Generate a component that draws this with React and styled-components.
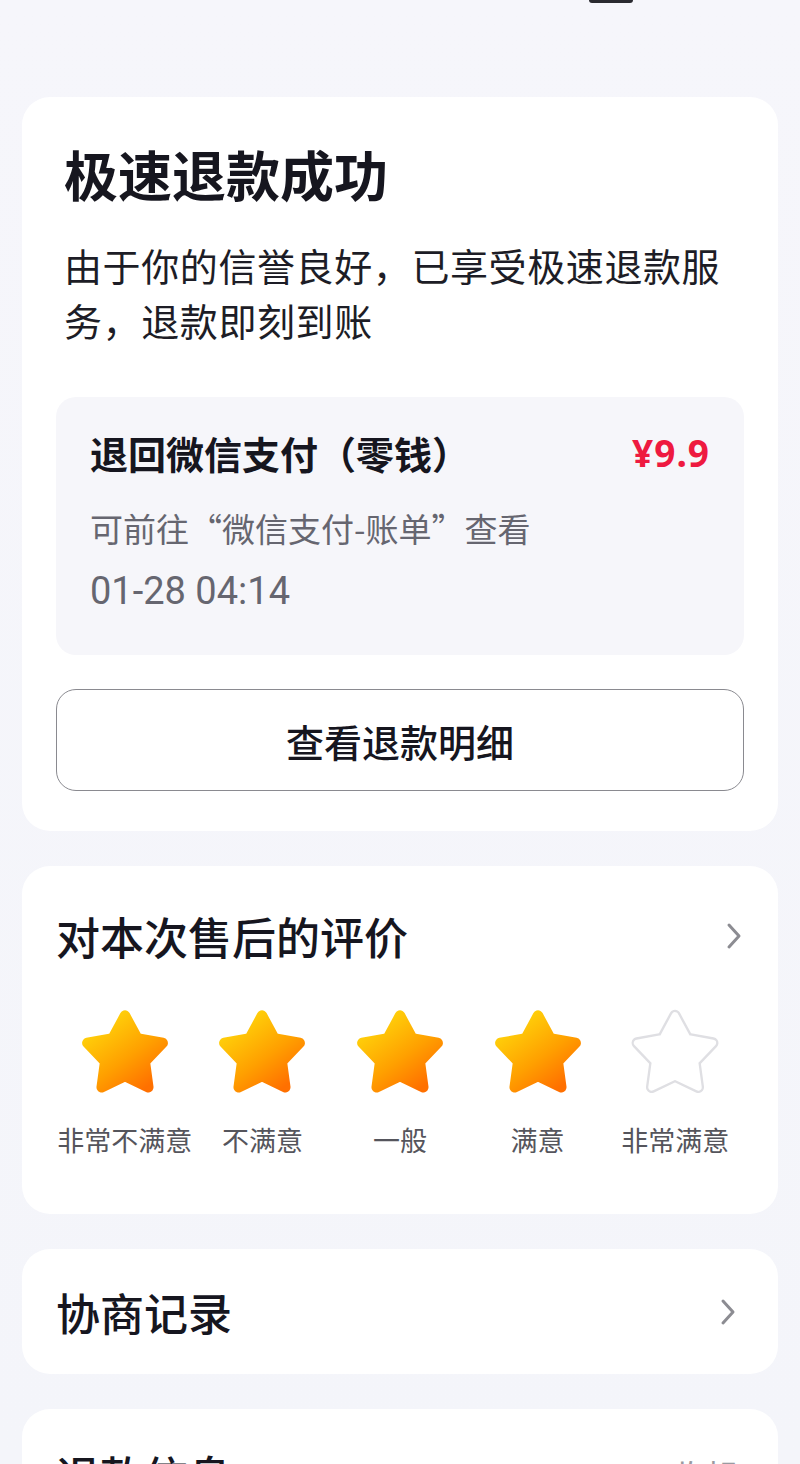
import React from 'react'
import styled, { createGlobalStyle } from 'styled-components'

const GlobalStyle = createGlobalStyle`
	html, body {
		margin: 0;
		padding: 0;
		background: #f5f5fa;
	}
	body {
		font-family: "Noto Sans CJK SC", "Noto Sans", sans-serif;
		color: #16161f;
	}
`

const Page = styled.div`
	width: 800px;
	height: 1464px;
	overflow: hidden;
	box-sizing: border-box;
	padding: 0 22px;
	background: linear-gradient(180deg, #f6f6fb 0%, #f4f5fa 100%);
	display: flex;
	flex-direction: column;
	gap: 35px;
`

const TopStrip = styled.div`
	height: 62px;
	flex-shrink: 0;
	display: flex;
	justify-content: flex-end;
	padding-right: 145px;
`

const Notch = styled.div`
	width: 44px;
	height: 3px;
	background: #2a2a30;
	border-radius: 0 0 3px 3px;
`

const Card = styled.div`
	background: #fff;
	border-radius: 28px;
	flex-shrink: 0;
	box-sizing: border-box;
	padding: ${(p) => p.$pad || '0 34px'};
`

const Title = styled.h1`
	margin: 0;
	padding-top: 44px;
	font-size: 54px;
	line-height: 66px;
	font-weight: 700;
	color: #16161f;
	padding-left: 8px;
`

const Desc = styled.p`
	margin: 30px 0 0;
	padding-left: 8px;
	font-size: 38px;
	line-height: 55px;
	color: #1d1d26;
	letter-spacing: 0.6px;
`

const RefundBox = styled.div`
	margin-top: 50px;
	background: #f6f6fa;
	border-radius: 20px;
	padding: 30px 34px 42px;
`

const BoxHead = styled.div`
	display: flex;
	justify-content: space-between;
	align-items: center;
`

const BoxTitle = styled.div`
	font-size: 38px;
	line-height: 50px;
	font-weight: 700;
	color: #16161f;
`

const Amount = styled.div`
	font-family: "Noto Sans", "Noto Sans CJK SC", sans-serif;
	font-size: 37px;
	font-weight: 700;
	color: #ee1a40;
	letter-spacing: 1px;
`

const BoxLine = styled.div`
	margin-top: ${(p) => p.$top || '0'};
	font-family: ${(p) => (p.$num ? 'Roboto, "Noto Sans CJK SC", sans-serif' : '"Noto Sans CJK SC", sans-serif')};
	font-size: ${(p) => (p.$num ? '38px' : '33px')};
	line-height: 44px;
	color: #666670;
`

const OutlineButton = styled.button`
	margin: 34px 0 40px;
	width: 100%;
	height: 102px;
	border: 1.5px solid #8a8a90;
	border-radius: 20px;
	background: #fff;
	font-family: "Noto Sans CJK SC", sans-serif;
	font-size: 38px;
	font-weight: 500;
	color: #16161f;
	cursor: pointer;
`

const SectionHead = styled.div`
	display: flex;
	justify-content: space-between;
	align-items: center;
	height: ${(p) => p.$h || 'auto'};
`

const SectionTitle = styled.div`
	font-size: 44px;
	line-height: 56px;
	font-weight: 500;
	color: #16161f;
`

const Stars = styled.div`
	display: grid;
	grid-template-columns: repeat(5, 1fr);
	margin-top: 40px;
`

const StarItem = styled.div`
	display: flex;
	flex-direction: column;
	align-items: center;
`

const StarLabel = styled.div`
	margin-top: 26px;
	font-size: 27px;
	line-height: 36px;
	color: #55555c;
	white-space: nowrap;
`

const MoreText = styled.span`
	font-size: 34px;
	color: #9a9aa0;
`

const Chevron = () => (
	<svg width="20" height="32" viewBox="0 0 20 32">
		<path d="M5 5 L15 16 L5 27" fill="none" stroke="#8c8c92" strokeWidth="3" strokeLinecap="round" strokeLinejoin="round" />
	</svg>
)

const starPoints =
	'46,11 57.76,32.82 82.14,37.26 65.02,55.18 68.34,79.74 46,69 23.66,79.74 26.98,55.18 9.86,37.26 34.24,32.82'

const Star = ({ filled, id }) => (
	<svg width="96" height="92" viewBox="0 0 92 88">
		<defs>
			<linearGradient id={id} x1="0.2" y1="0.1" x2="0.85" y2="0.95">
				<stop offset="0%" stopColor="#ffd00a" />
				<stop offset="55%" stopColor="#ffa000" />
				<stop offset="100%" stopColor="#ff7000" />
			</linearGradient>
		</defs>
		{filled ? (
			<polygon points={starPoints} fill={`url(#${id})`} stroke={`url(#${id})`} strokeWidth="10" strokeLinejoin="round" />
		) : (
			<>
				<polygon points={starPoints} fill="#dfdfe3" stroke="#dfdfe3" strokeWidth="11" strokeLinejoin="round" />
				<polygon points={starPoints} fill="#fff" stroke="#fff" strokeWidth="6.5" strokeLinejoin="round" />
			</>
		)}
	</svg>
)

const ratings = ['非常不满意', '不满意', '一般', '满意', '非常满意']

function App() {
	const score = 4

	return (
		<>
			<GlobalStyle />
			<Page>
				<TopStrip>
					<Notch />
				</TopStrip>

				<Card>
					<Title>极速退款成功</Title>
					<Desc>由于你的信誉良好，已享受极速退款服务，退款即刻到账</Desc>
					<RefundBox>
						<BoxHead>
							<BoxTitle>退回微信支付（零钱）</BoxTitle>
							<Amount>¥9.9</Amount>
						</BoxHead>
						<BoxLine $top="28px">可前往“微信支付-账单”查看</BoxLine>
						<BoxLine $top="19px" $num>01-28 04:14</BoxLine>
					</RefundBox>
					<OutlineButton>查看退款明细</OutlineButton>
				</Card>

				<Card $pad="42px 34px 56px">
					<SectionHead>
						<SectionTitle>对本次售后的评价</SectionTitle>
						<Chevron />
					</SectionHead>
					<Stars>
						{ratings.map((label, i) => (
							<StarItem key={label}>
								<Star filled={i < score} id={`starGrad${i}`} />
								<StarLabel>{label}</StarLabel>
							</StarItem>
						))}
					</Stars>
				</Card>

				<Card $pad="0 40px 0 34px">
					<SectionHead $h="125px">
						<SectionTitle>协商记录</SectionTitle>
						<Chevron />
					</SectionHead>
				</Card>

				<Card $pad="38px 40px 40px 34px">
					<SectionHead>
						<SectionTitle>退款信息</SectionTitle>
						<MoreText>收起</MoreText>
					</SectionHead>
				</Card>
			</Page>
		</>
	)
}

export default App
